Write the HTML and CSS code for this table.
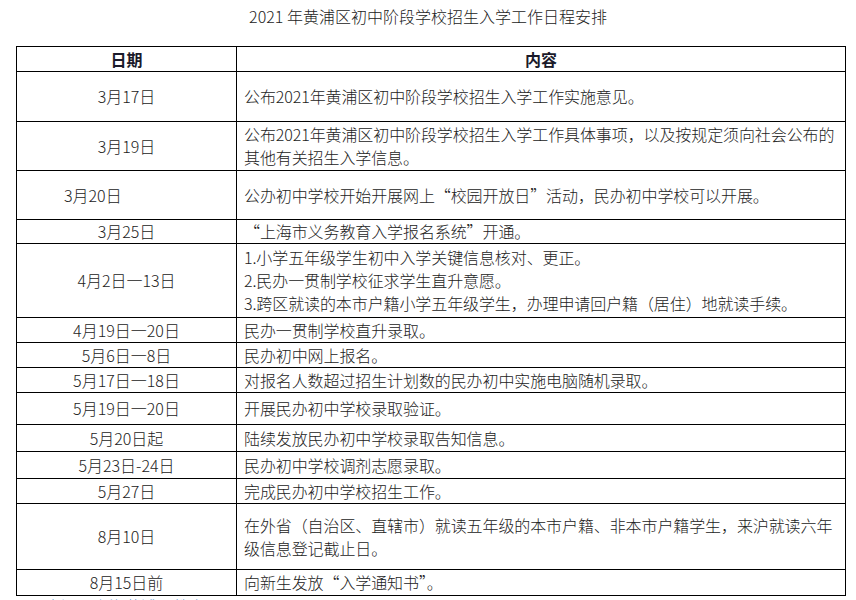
FILE: index.html
```html
<!DOCTYPE html>
<html lang="zh-CN">
<head>
<meta charset="utf-8">
<title>2021 年黄浦区初中阶段学校招生入学工作日程安排</title>
<link rel="stylesheet" href="styles.css">
</head>
<body>
<h1 class="title">2021 年黄浦区初中阶段学校招生入学工作日程安排</h1>
<table class="sched">
  <colgroup><col class="c-date"><col class="c-text"></colgroup>
  <tr class="head h25"><th>日期</th><th>内容</th></tr>
  <tr class="h50"><td class="d">3月17日</td><td class="t">公布2021年黄浦区初中阶段学校招生入学工作实施意见。</td></tr>
  <tr class="h49"><td class="d">3月19日</td><td class="t">公布2021年黄浦区初中阶段学校招生入学工作具体事项，以及按规定须向社会公布的<br>其他有关招生入学信息。</td></tr>
  <tr class="h49"><td class="d left">3月20日</td><td class="t">公办初中学校开始开展网上“校园开放日”活动，民办初中学校可以开展。</td></tr>
  <tr class="h23"><td class="d">3月25日</td><td class="t">“上海市义务教育入学报名系统”开通。</td></tr>
  <tr class="h74"><td class="d">4月2日一13日</td><td class="t">1.小学五年级学生初中入学关键信息核对、更正。<br>2.民办一贯制学校征求学生直升意愿。<br>3.跨区就读的本市户籍小学五年级学生，办理申请回户籍（居住）地就读手续。</td></tr>
  <tr class="h25"><td class="d">4月19日一20日</td><td class="t">民办一贯制学校直升录取。</td></tr>
  <tr class="h25"><td class="d">5月6日一8日</td><td class="t">民办初中网上报名。</td></tr>
  <tr class="h25"><td class="d">5月17日一18日</td><td class="t">对报名人数超过招生计划数的民办初中实施电脑随机录取。</td></tr>
  <tr class="h32"><td class="d">5月19日一20日</td><td class="t">开展民办初中学校录取验证。</td></tr>
  <tr class="h27"><td class="d">5月20日起</td><td class="t">陆续发放民办初中学校录取告知信息。</td></tr>
  <tr class="h27"><td class="d">5月23日-24日</td><td class="t">民办初中学校调剂志愿录取。</td></tr>
  <tr class="h25"><td class="d">5月27日</td><td class="t">完成民办初中学校招生工作。</td></tr>
  <tr class="h66"><td class="d">8月10日</td><td class="t">在外省（自治区、直辖市）就读五年级的本市户籍、非本市户籍学生，来沪就读六年<br>级信息登记截止日。</td></tr>
  <tr class="h26"><td class="d">8月15日前</td><td class="t">向新生发放“入学通知书”。</td></tr>
</table>
<p class="source">来源：上海黄浦区教育局</p>
</body>
</html>
```

FILE: styles.css
```css
html, body {
  margin: 0;
  padding: 0;
  background: #ffffff;
}

body {
  font-family: "Noto Sans CJK SC", "Noto Sans", sans-serif;
  font-weight: 300;
  color: #222222;
  font-size: 16px;
  overflow: hidden;
  height: 600px;
}

.title {
  margin: 0;
  padding-top: 5px;
  height: 46px;
  box-sizing: border-box;
  font-size: 16px;
  font-weight: 300;
  line-height: 22px;
  text-align: center;
  color: #222222;
}

.sched {
  margin-left: 16px;
  width: 830px;
  border-collapse: collapse;
  table-layout: fixed;
}

.c-date { width: 220px; }

.sched th,
.sched td {
  border: 1px solid #000000;
  padding: 0 7px;
  line-height: 23px;
  vertical-align: middle;
}

.sched th {
  font-weight: 700;
  text-align: center;
  color: #1a1a2a;
}

.sched .d {
  text-align: center;
  padding: 0 4px;
}

.sched .d.left {
  text-align: left;
  padding-left: 47px;
}

.sched .t {
  text-align: left;
  white-space: nowrap;
  padding-right: 0;
  letter-spacing: -0.1px;
}

.h23 td, .h23 th { height: 22px; }
.h25 td, .h25 th { height: 24px; }
.h26 td { height: 25px; }
.h27 td { height: 26px; }
.h32 td { height: 31px; }
.h49 td { height: 48px; }
.h50 td { height: 49px; }
.h66 td { height: 65px; }
.h74 td { height: 73px; }

.source {
  margin: 0 0 0 45px;
  font-size: 16px;
  line-height: 20px;
  color: #1e6fc0;
}
```
